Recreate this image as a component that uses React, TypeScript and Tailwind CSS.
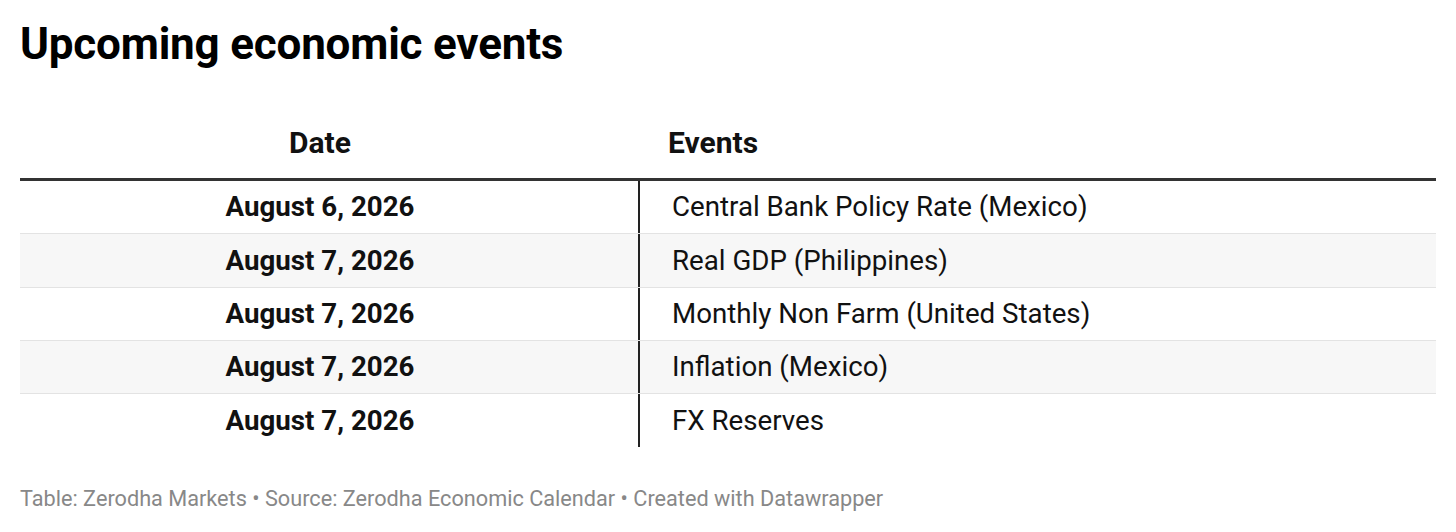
const rows = [
  { date: "August 6, 2026", event: "Central Bank Policy Rate (Mexico)" },
  { date: "August 7, 2026", event: "Real GDP (Philippines)" },
  { date: "August 7, 2026", event: "Monthly Non Farm (United States)" },
  { date: "August 7, 2026", event: "Inflation (Mexico)" },
  { date: "August 7, 2026", event: "FX Reserves" },
];

export default function App() {
  return (
    <div
      className="w-[1456px] h-[532px] bg-white px-5 pt-[18px] text-[#111111]"
      style={{ fontFamily: "Roboto, 'Liberation Sans', sans-serif" }}
    >
      <h1 className="text-[44px] font-bold leading-[52px] tracking-[-0.2px] text-black">Upcoming economic events</h1>

      <div className="mt-[55px] w-[1416px]">
        {/* header */}
        <div className="flex pb-[17px] leading-[36px] border-b-[3px] border-[#333333] text-[30px] font-bold">
          <div className="w-[618px] pr-[18px] text-center">Date</div>
          <div className="flex-1 pl-[30px]">Events</div>
        </div>

        {rows.map((r, i) => (
          <div
            key={i}
            className={`flex h-[53.3px] items-center text-[27.7px] ${
              i % 2 === 1 ? "bg-[#f7f7f7]" : "bg-white"
            } ${i < rows.length - 1 ? "border-b border-[#e3e3e3]" : ""}`}
          >
            <div className="w-[618px] pr-[18px] text-center font-bold">{r.date}</div>
            <div className="flex h-full flex-1 items-center border-l-2 border-[#222222] pl-[32px]">{r.event}</div>
          </div>
        ))}
      </div>

      <p className="mt-[38px] text-[21.7px] leading-[28px] text-[#888888]">
        Table: Zerodha Markets • Source: Zerodha Economic Calendar • Created with Datawrapper
      </p>
    </div>
  );
}
